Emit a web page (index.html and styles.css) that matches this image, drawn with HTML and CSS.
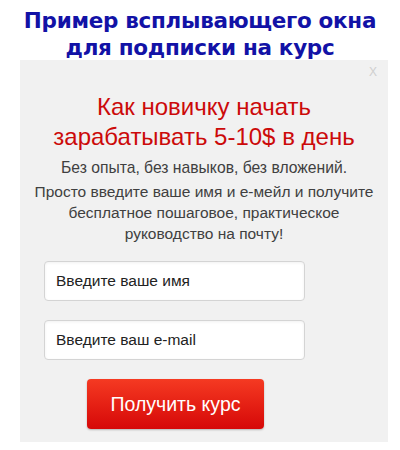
FILE: index.html
```html
<!DOCTYPE html>
<html lang="ru">
<head>
<meta charset="utf-8">
<link rel="stylesheet" href="styles.css">
</head>
<body>
<h1 class="title">Пример всплывающего окна<br>для подписки на курс</h1>
<div class="popup">
  <span class="close">X</span>
  <h2 class="heading">Как новичку начать<br>зарабатывать 5-10$ в день</h2>
  <p class="sub">Без опыта, без навыков, без вложений.</p>
  <p class="desc">Просто введите ваше имя и е-мейл и получите<br>бесплатное пошаговое, практическое<br>руководство на почту!</p>
  <form class="form">
    <div class="field">Введите ваше имя</div>
    <div class="field">Введите ваш e-mail</div>
    <div class="btn">Получить курс</div>
  </form>
</div>
</body>
</html>
```
FILE: styles.css
```css
html, body {
  margin: 0;
  padding: 0;
  background: #ffffff;
}
body {
  width: 400px;
  height: 450px;
  overflow: hidden;
  font-family: "Liberation Sans", Arial, sans-serif;
}
.title {
  margin: 0;
  padding-top: 7px;
  height: 53px;
  text-align: center;
  font-family: "DejaVu Sans", Verdana, sans-serif;
  font-weight: bold;
  font-size: 21.5px;
  line-height: 27px;
  color: #1212a6;
  letter-spacing: -0.3px;
}
.popup {
  position: relative;
  margin-left: 20px;
  width: 368px;
  height: 382px;
  background: #f1f1f1;
  box-sizing: border-box;
  padding-top: 32px;
}
.close {
  position: absolute;
  right: 11px;
  top: 5px;
  color: #cfcfcf;
  font-size: 12px;
  line-height: 14px;
}
.heading {
  margin: 0;
  text-align: center;
  font-weight: normal;
  font-size: 24px;
  line-height: 30px;
  color: #cc0a0a;
}
.sub {
  margin: 6px 0 0;
  text-align: center;
  font-size: 15.7px;
  line-height: 20px;
  color: #404040;
}
.desc {
  margin: 3px 0 0;
  text-align: center;
  font-size: 15.5px;
  line-height: 21px;
  color: #404040;
}
.form {
  margin: 17px 0 0 24px;
  display: flex;
  flex-direction: column;
  align-items: flex-start;
}
.field {
  width: 261px;
  height: 40px;
  box-sizing: border-box;
  border: 1px solid #d4d4d4;
  border-radius: 4px;
  background: #ffffff;
  box-shadow: inset 0 1px 3px rgba(0,0,0,0.06);
  padding-left: 11px;
  display: flex;
  align-items: center;
  font-size: 15.5px;
  color: #222;
  margin-bottom: 19px;
}
.btn {
  margin-left: 43px;
  width: 177px;
  height: 50px;
  border-radius: 4px;
  background: linear-gradient(#f53a22, #d60808);
  box-shadow: 0 1px 2px rgba(0,0,0,0.25);
  color: #ffffff;
  font-size: 19.5px;
  display: flex;
  align-items: center;
  justify-content: center;
}
```
